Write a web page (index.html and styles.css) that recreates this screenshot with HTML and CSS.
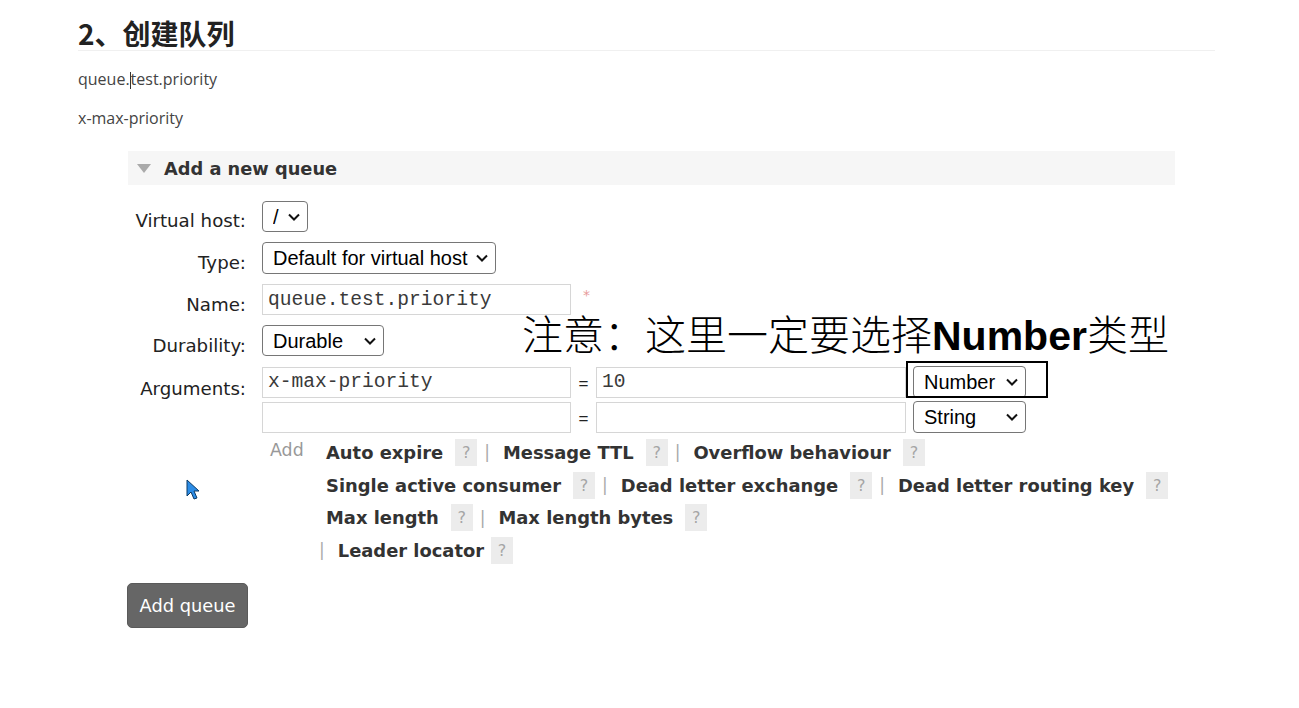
FILE: index.html
```html
<!DOCTYPE html>
<html lang="zh-CN">
<head>
<meta charset="utf-8">
<title>创建队列</title>
<link rel="stylesheet" href="styles.css">
</head>
<body>
<div class="page">
  <h2 class="title">2、创建队列</h2>
  <p class="note">queue.<span class="caret"></span>test.priority</p>
  <p class="note">x-max-priority</p>

  <div class="panel">
    <div class="panel-head"><span class="tri"></span>Add a new queue</div>
    <div class="form">
      <div class="lbl lbl-first">Virtual host:</div>
      <div class="ctl">
        <span class="sel w-vhost"><select><option>/</option></select><svg class="chev" viewBox="0 0 12 8"><path d="M1 1.5 L6 6.5 L11 1.5"/></svg></span>
      </div>

      <div class="lbl">Type:</div>
      <div class="ctl">
        <span class="sel w-type"><select><option>Default for virtual host</option></select><svg class="chev" viewBox="0 0 12 8"><path d="M1 1.5 L6 6.5 L11 1.5"/></svg></span>
      </div>

      <div class="lbl">Name:</div>
      <div class="ctl">
        <input class="txt w-in" type="text" value="queue.test.priority"><span class="req">*</span>
      </div>

      <div class="lbl">Durability:</div>
      <div class="ctl">
        <span class="sel w-dur"><select><option>Durable</option></select><svg class="chev" viewBox="0 0 12 8"><path d="M1 1.5 L6 6.5 L11 1.5"/></svg></span>
      </div>

      <div class="lbl lbl-args">Arguments:</div>
      <div class="ctl args">
        <div class="arg-row">
          <input class="txt w-in" type="text" value="x-max-priority"><span class="eq">=</span><input class="txt w-val" type="text" value="10">
          <span class="sel w-kind"><select><option>Number</option></select><svg class="chev" viewBox="0 0 12 8"><path d="M1 1.5 L6 6.5 L11 1.5"/></svg></span>
        </div>
        <div class="arg-row">
          <input class="txt w-in" type="text" value=""><span class="eq">=</span><input class="txt w-val" type="text" value="">
          <span class="sel w-kind"><select><option>String</option></select><svg class="chev" viewBox="0 0 12 8"><path d="M1 1.5 L6 6.5 L11 1.5"/></svg></span>
        </div>
      </div>

      <div class="lbl lbl-empty"></div>
      <div class="ctl add-block">
        <span class="add">Add</span>
        <div class="links">
          <div class="lrow"><span class="lnk">Auto expire</span><span class="help">?</span><span class="sep">|</span><span class="lnk">Message TTL</span><span class="help">?</span><span class="sep">|</span><span class="lnk">Overflow behaviour</span><span class="help">?</span></div>
          <div class="lrow"><span class="lnk">Single active consumer</span><span class="help">?</span><span class="sep">|</span><span class="lnk">Dead letter exchange</span><span class="help">?</span><span class="sep">|</span><span class="lnk">Dead letter routing key</span><span class="help">?</span></div>
          <div class="lrow"><span class="lnk">Max length</span><span class="help">?</span><span class="sep">|</span><span class="lnk">Max length bytes</span><span class="help">?</span></div>
          <div class="lrow lrow-last"><span class="sep">|</span><span class="lnk">Leader locator</span><span class="help help-tight">?</span></div>
        </div>
      </div>
    </div>
  </div>

  <button class="btn" type="button">Add queue</button>

  <div class="callout">注意：这里一定要选择<b>Number</b>类型</div>
  <div class="highlight"></div>
  <svg class="cursor" viewBox="0 0 14 22"><path d="M1 1 L1 17 L5 13 L8 20 L11 19 L8 12 L13 12 Z"/></svg>
</div>
</body>
</html>
```

FILE: styles.css
```css
html, body {
  margin: 0;
  padding: 0;
  background: #fff;
}

.page {
  position: relative;
  width: 1299px;
  height: 708px;
  overflow: hidden;
  padding-left: 78px;
  box-sizing: border-box;
  font-family: "DejaVu Sans", Verdana, sans-serif;
  color: #222;
}

.title {
  margin: 0;
  width: 1137px;
  padding-top: 16px;
  line-height: 34px;
  font-family: "Noto Sans CJK SC", "Noto Sans", sans-serif;
  font-size: 28px;
  font-weight: 700;
  color: #222;
  border-bottom: 1px solid #f0f0f0;
}

.note {
  margin: 18px 0 0 0;
  font-family: "Open Sans", "Noto Sans", sans-serif;
  font-size: 16px;
  line-height: 20px;
  color: #444;
}

.note + .note {
  margin-top: 19px;
}

.caret {
  display: inline-block;
  width: 0;
  height: 17px;
  border-left: 1px solid #333;
  vertical-align: -4px;
}

.panel {
  margin: 23px 0 0 50px;
  width: 1047px;
}

.panel-head {
  display: flex;
  align-items: center;
  height: 34px;
  background: #f6f6f6;
  font-size: 17.8px;
  font-weight: 700;
  color: #333;
}

.tri {
  width: 0;
  height: 0;
  margin: 0 13px 0 9px;
  border-left: 7.5px solid transparent;
  border-right: 7.5px solid transparent;
  border-top: 9px solid #aaa;
}

.form {
  display: grid;
  grid-template-columns: 118px 1fr;
  column-gap: 16px;
  row-gap: 10px;
  margin-top: 16px;
}

.lbl {
  text-align: right;
  font-size: 18.2px;
  line-height: 20px;
  padding-top: 11px;
  color: #222;
}

.lbl-first {
  padding-top: 10px;
}

.lbl-args {
  padding-top: 13px;
}

.lbl-empty {
  padding-top: 0;
}

.ctl {
  display: flex;
  align-items: flex-start;
}

.sel {
  position: relative;
  display: inline-block;
  height: 31px;
}

.sel select {
  appearance: none;
  -webkit-appearance: none;
  width: 100%;
  height: 100%;
  margin: 0;
  padding: 0 0 0 10px;
  border: 1px solid #767676;
  border-radius: 4px;
  background: #fff;
  font-family: "Liberation Sans", Arial, sans-serif;
  font-size: 20px;
  color: #000;
}

.chev {
  position: absolute;
  right: 8px;
  top: 12px;
  width: 12px;
  height: 8px;
  fill: none;
  stroke: #111;
  stroke-width: 2;
  pointer-events: none;
}

.w-vhost { width: 46px; }
.w-type { width: 234px; height: 32px; }
.w-dur { width: 122px; }
.w-kind { width: 113px; margin-left: 7px; height: 32px; }

.txt {
  height: 31px;
  margin: 0;
  padding: 0 0 0 5px;
  box-sizing: border-box;
  border: 1px solid #d6d6d6;
  border-radius: 0;
  background: #fff;
  font-family: "Liberation Mono", "Courier New", monospace;
  font-size: 19.6px;
  color: #3a3a3a;
  outline: none;
}

.w-in { width: 309px; }
.w-val { width: 310px; }

.req {
  margin-left: 12px;
  margin-top: 4px;
  font-size: 14px;
  line-height: 14px;
  color: #e79a9a;
}

.args {
  flex-direction: column;
  gap: 3px;
}

.arg-row {
  display: flex;
  align-items: center;
}

.eq {
  width: 25px;
  text-align: center;
  font-family: "Liberation Sans", Arial, sans-serif;
  font-size: 17px;
  color: #222;
  padding-top: 4px;
}

.add-block {
  margin-top: -7px;
}

.add {
  width: 56px;
  margin-left: 8px;
  font-size: 17.4px;
  line-height: 28px;
  color: #999;
}

.links {
  display: flex;
  flex-direction: column;
}

.lrow {
  display: flex;
  align-items: center;
  height: 32.7px;
  white-space: nowrap;
}

.lrow-last {
  margin-left: -7px;
}

.lnk {
  font-size: 17.9px;
  font-weight: 700;
  color: #333;
}

.help {
  display: inline-flex;
  align-items: center;
  justify-content: center;
  width: 22px;
  height: 27px;
  margin: 0 4px 0 12px;
  background: #ececec;
  font-size: 16px;
  color: #a5a5a5;
}

.help-tight {
  margin-left: 7px;
}

.sep {
  margin: 0 13px 0 3px;
  font-size: 17px;
  color: #aaa;
}

.lrow-last .sep {
  margin-left: 0;
}

.btn {
  display: block;
  margin: 16px 0 0 49px;
  width: 121px;
  height: 45px;
  padding: 0;
  border: 1px solid #5a5a5a;
  border-radius: 5px;
  background: #666;
  color: #fff;
  font-family: "DejaVu Sans", Verdana, sans-serif;
  font-size: 17.8px;
}

.callout {
  position: absolute;
  left: 522px;
  top: 308px;
  font-family: "Noto Sans CJK SC", "Noto Sans", sans-serif;
  font-size: 41px;
  line-height: 48px;
  font-weight: 300;
  color: #000;
  white-space: nowrap;
}

.callout b {
  font-family: "Liberation Sans", Arial, sans-serif;
  font-weight: 700;
}

.highlight {
  position: absolute;
  left: 906px;
  top: 361px;
  width: 142px;
  height: 37px;
  box-sizing: border-box;
  border: 2px solid #000;
}

.cursor {
  position: absolute;
  left: 186px;
  top: 479px;
  width: 14px;
  height: 22px;
  fill: #2b8ce6;
  stroke: #0a3a66;
  stroke-width: 1;
}
```
